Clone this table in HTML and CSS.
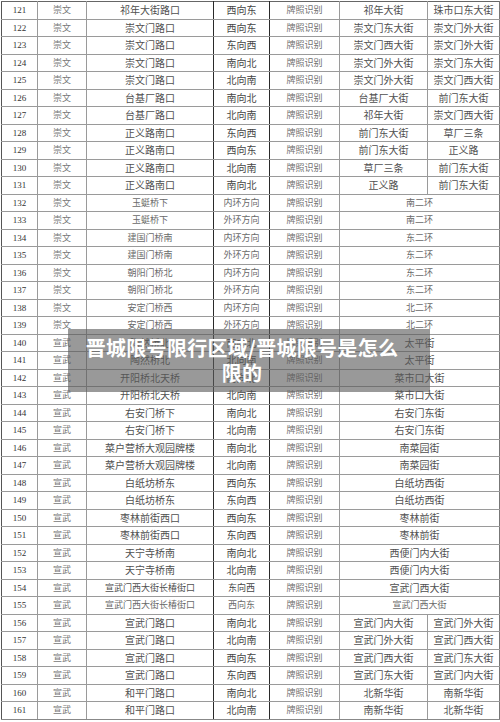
FILE: index.html
```html
<!DOCTYPE html>
<html lang="zh-CN">
<head>
<meta charset="utf-8">
<title>晋城限号限行区域</title>
<link rel="stylesheet" href="styles.css">
</head>
<body>
<div class="page">
<table class="sheet">
<colgroup>
<col class="c-no"><col class="c-dist"><col class="c-loc"><col class="c-dir"><col class="c-type"><col class="c-a"><col class="c-b">
</colgroup>
<tbody>
<tr><td class="no">121</td><td class="dist">崇文</td><td class="loc">祁年大街路口</td><td class="dir">西向东</td><td class="type">牌照识别</td><td class="rd">祁年大街</td><td class="rd">珠市口东大街</td></tr>
<tr><td class="no">122</td><td class="dist">崇文</td><td class="loc">崇文门路口</td><td class="dir">西向东</td><td class="type">牌照识别</td><td class="rd">崇文门东大街</td><td class="rd">崇文门外大街</td></tr>
<tr><td class="no">123</td><td class="dist">崇文</td><td class="loc">崇文门路口</td><td class="dir">东向西</td><td class="type">牌照识别</td><td class="rd">崇文门西大街</td><td class="rd">崇文门外大街</td></tr>
<tr class="dk"><td class="no">124</td><td class="dist">崇文</td><td class="loc">崇文门路口</td><td class="dir">南向北</td><td class="type">牌照识别</td><td class="rd">崇文门外大街</td><td class="rd">崇文门东大街</td></tr>
<tr><td class="no">125</td><td class="dist">崇文</td><td class="loc">崇文门路口</td><td class="dir">北向南</td><td class="type">牌照识别</td><td class="rd">崇文门外大街</td><td class="rd">崇文门西大街</td></tr>
<tr><td class="no">126</td><td class="dist">崇文</td><td class="loc">台基厂路口</td><td class="dir">南向北</td><td class="type">牌照识别</td><td class="rd">台基厂大街</td><td class="rd">前门东大街</td></tr>
<tr class="dk"><td class="no">127</td><td class="dist">崇文</td><td class="loc">台基厂路口</td><td class="dir">北向南</td><td class="type">牌照识别</td><td class="rd">祁年大街</td><td class="rd">崇文门西大街</td></tr>
<tr><td class="no">128</td><td class="dist">崇文</td><td class="loc">正义路南口</td><td class="dir">东向西</td><td class="type">牌照识别</td><td class="rd">前门东大街</td><td class="rd">草厂三条</td></tr>
<tr><td class="no">129</td><td class="dist">崇文</td><td class="loc">正义路南口</td><td class="dir">西向东</td><td class="type">牌照识别</td><td class="rd">前门东大街</td><td class="rd">正义路</td></tr>
<tr class="dk"><td class="no">130</td><td class="dist">崇文</td><td class="loc">正义路南口</td><td class="dir">北向南</td><td class="type">牌照识别</td><td class="rd">草厂三条</td><td class="rd">前门东大街</td></tr>
<tr><td class="no">131</td><td class="dist">崇文</td><td class="loc">正义路南口</td><td class="dir">南向北</td><td class="type">牌照识别</td><td class="rd">正义路</td><td class="rd">前门东大街</td></tr>
<tr class="dk lt"><td class="no">132</td><td class="dist">崇文</td><td class="loc">玉蜓桥下</td><td class="dir">内环方向</td><td class="type">牌照识别</td><td class="rd" colspan="2">南二环</td></tr>
<tr class="lt"><td class="no">133</td><td class="dist">崇文</td><td class="loc">玉蜓桥下</td><td class="dir">外环方向</td><td class="type">牌照识别</td><td class="rd" colspan="2">南二环</td></tr>
<tr class="lt"><td class="no">134</td><td class="dist">崇文</td><td class="loc">建国门桥南</td><td class="dir">内环方向</td><td class="type">牌照识别</td><td class="rd" colspan="2">东二环</td></tr>
<tr class="lt"><td class="no">135</td><td class="dist">崇文</td><td class="loc">建国门桥南</td><td class="dir">外环方向</td><td class="type">牌照识别</td><td class="rd" colspan="2">东二环</td></tr>
<tr class="dk lt"><td class="no">136</td><td class="dist">崇文</td><td class="loc">朝阳门桥北</td><td class="dir">内环方向</td><td class="type">牌照识别</td><td class="rd" colspan="2">东二环</td></tr>
<tr class="lt"><td class="no">137</td><td class="dist">崇文</td><td class="loc">朝阳门桥北</td><td class="dir">外环方向</td><td class="type">牌照识别</td><td class="rd" colspan="2">东二环</td></tr>
<tr class="lt"><td class="no">138</td><td class="dist">崇文</td><td class="loc">安定门桥西</td><td class="dir">内环方向</td><td class="type">牌照识别</td><td class="rd" colspan="2">北二环</td></tr>
<tr class="lt"><td class="no">139</td><td class="dist">崇文</td><td class="loc">安定门桥西</td><td class="dir">外环方向</td><td class="type">牌照识别</td><td class="rd" colspan="2">北二环</td></tr>
<tr class="dk"><td class="no">140</td><td class="dist">宣武</td><td class="loc">陶然桥北</td><td class="dir">南向北</td><td class="type">牌照识别</td><td class="rd" colspan="2">太平街</td></tr>
<tr><td class="no">141</td><td class="dist">宣武</td><td class="loc">陶然桥北</td><td class="dir">北向南</td><td class="type">牌照识别</td><td class="rd" colspan="2">太平街</td></tr>
<tr><td class="no">142</td><td class="dist">宣武</td><td class="loc">开阳桥北天桥</td><td class="dir">南向北</td><td class="type">牌照识别</td><td class="rd" colspan="2">菜市口大街</td></tr>
<tr><td class="no">143</td><td class="dist">宣武</td><td class="loc">开阳桥北天桥</td><td class="dir">北向南</td><td class="type">牌照识别</td><td class="rd" colspan="2">菜市口大街</td></tr>
<tr><td class="no">144</td><td class="dist">宣武</td><td class="loc">右安门桥下</td><td class="dir">南向北</td><td class="type">牌照识别</td><td class="rd" colspan="2">右安门东街</td></tr>
<tr class="dk"><td class="no">145</td><td class="dist">宣武</td><td class="loc">右安门桥下</td><td class="dir">北向南</td><td class="type">牌照识别</td><td class="rd" colspan="2">右安门东街</td></tr>
<tr><td class="no">146</td><td class="dist">宣武</td><td class="loc">菜户营桥大观园牌楼</td><td class="dir">南向北</td><td class="type">牌照识别</td><td class="rd" colspan="2">南菜园街</td></tr>
<tr><td class="no">147</td><td class="dist">宣武</td><td class="loc">菜户营桥大观园牌楼</td><td class="dir">北向南</td><td class="type">牌照识别</td><td class="rd" colspan="2">南菜园街</td></tr>
<tr class="dk"><td class="no">148</td><td class="dist">宣武</td><td class="loc">白纸坊桥东</td><td class="dir">西向东</td><td class="type">牌照识别</td><td class="rd" colspan="2">白纸坊西街</td></tr>
<tr><td class="no">149</td><td class="dist">宣武</td><td class="loc">白纸坊桥东</td><td class="dir">东向西</td><td class="type">牌照识别</td><td class="rd" colspan="2">白纸坊西街</td></tr>
<tr class="dk"><td class="no">150</td><td class="dist">宣武</td><td class="loc">枣林前街西口</td><td class="dir">西向东</td><td class="type">牌照识别</td><td class="rd" colspan="2">枣林前街</td></tr>
<tr><td class="no">151</td><td class="dist">宣武</td><td class="loc">枣林前街西口</td><td class="dir">东向西</td><td class="type">牌照识别</td><td class="rd" colspan="2">枣林前街</td></tr>
<tr class="dk"><td class="no">152</td><td class="dist">宣武</td><td class="loc">天宁寺桥南</td><td class="dir">南向北</td><td class="type">牌照识别</td><td class="rd" colspan="2">西便门内大街</td></tr>
<tr><td class="no">153</td><td class="dist">宣武</td><td class="loc">天宁寺桥南</td><td class="dir">北向南</td><td class="type">牌照识别</td><td class="rd" colspan="2">西便门内大街</td></tr>
<tr><td class="no">154</td><td class="dist">宣武</td><td class="loc sm">宣武门西大街长椿街口</td><td class="dir sm">东向西</td><td class="type">牌照识别</td><td class="rd" colspan="2">宣武门西大街</td></tr>
<tr class="lt"><td class="no">155</td><td class="dist">宣武</td><td class="loc sm">宣武门西大街长椿街口</td><td class="dir sm">西向东</td><td class="type">牌照识别</td><td class="rd" colspan="2">宣武门西大街</td></tr>
<tr><td class="no">156</td><td class="dist">宣武</td><td class="loc">宣武门路口</td><td class="dir">南向北</td><td class="type">牌照识别</td><td class="rd">宣武门内大街</td><td class="rd">宣武门外大街</td></tr>
<tr><td class="no">157</td><td class="dist">宣武</td><td class="loc">宣武门路口</td><td class="dir">北向南</td><td class="type">牌照识别</td><td class="rd">宣武门外大街</td><td class="rd">宣武门西大街</td></tr>
<tr class="dk"><td class="no">158</td><td class="dist">宣武</td><td class="loc">宣武门路口</td><td class="dir">西向东</td><td class="type">牌照识别</td><td class="rd">宣武门西大街</td><td class="rd">宣武门东大街</td></tr>
<tr><td class="no">159</td><td class="dist">宣武</td><td class="loc">宣武门路口</td><td class="dir">东向西</td><td class="type">牌照识别</td><td class="rd">宣武门东大街</td><td class="rd">宣武门内大街</td></tr>
<tr><td class="no">160</td><td class="dist">宣武</td><td class="loc">和平门路口</td><td class="dir">南向北</td><td class="type">牌照识别</td><td class="rd">北新华街</td><td class="rd">南新华街</td></tr>
<tr class="dk"><td class="no">161</td><td class="dist">宣武</td><td class="loc">和平门路口</td><td class="dir">北向南</td><td class="type">牌照识别</td><td class="rd">南新华街</td><td class="rd">北新华街</td></tr>
</tbody>
</table>
<div class="caption">晋城限号限行区域/晋城限号是怎么<br>限的</div>
</div>
</body>
</html>
```

FILE: styles.css
```css
html, body {
  margin: 0;
  padding: 0;
  background: #ffffff;
}

.page {
  position: relative;
  width: 500px;
  height: 722px;
  overflow: hidden;
  padding-top: 1px;
  box-sizing: border-box;
}

.sheet {
  margin-left: 1px;
  width: 498px;
  table-layout: fixed;
  border-collapse: collapse;
  font-family: "Noto Sans CJK SC", "Noto Sans", sans-serif;
  color: #4a4a4a;
}

.c-no { width: 36px; }
.c-dist { width: 49px; }
.c-loc { width: 127px; }
.c-dir { width: 56px; }
.c-type { width: 70px; }
.c-a { width: 88px; }
.c-b { width: 72px; }

.sheet td {
  height: 16.5px;
  padding: 0;
  border: 1px solid #9a9a9a;
  text-align: center;
  vertical-align: middle;
  white-space: nowrap;
  overflow: hidden;
  font-size: 10px;
  line-height: 16px;
}

.sheet td:first-child { border-left-color: #555; }
.sheet td:last-child { border-right-color: #777; }
.sheet td.loc { border-right: 1px solid #2a2a2a; }
.sheet td.dir { border-right: 1px solid #2a2a2a; }

.sheet tr.dk td { border-top-color: #262626; }
.sheet tr:first-child td { border-top-color: #666; }
.sheet tr:last-child td { border-bottom-color: #888; }

.sheet td.no {
  font-family: "Liberation Serif", serif;
  font-size: 9px;
  color: #333;
}

.sheet td.dist {
  font-size: 9px;
  color: #777;
}

.sheet td.loc { color: #505050; }
.sheet td.dir { color: #454545; }
.sheet td.type {
  font-size: 9px;
  color: #707070;
}
.sheet td.rd { color: #505050; }

.sheet tr.lt td.loc,
.sheet tr.lt td.dir,
.sheet tr.lt td.rd {
  font-size: 9px;
  color: #6a6a6a;
}

.sheet td.sm { font-size: 9px; }

.caption {
  position: absolute;
  left: 68px;
  top: 329px;
  width: 362px;
  height: 63px;
  box-sizing: border-box;
  padding: 6px 14px 0 0;
  background: rgba(90, 90, 90, 0.62);
  color: #ffffff;
  font-family: "Noto Sans CJK SC", "Noto Sans", sans-serif;
  font-weight: 700;
  font-size: 20px;
  line-height: 25px;
  text-align: center;
  letter-spacing: 0.3px;
}
```
